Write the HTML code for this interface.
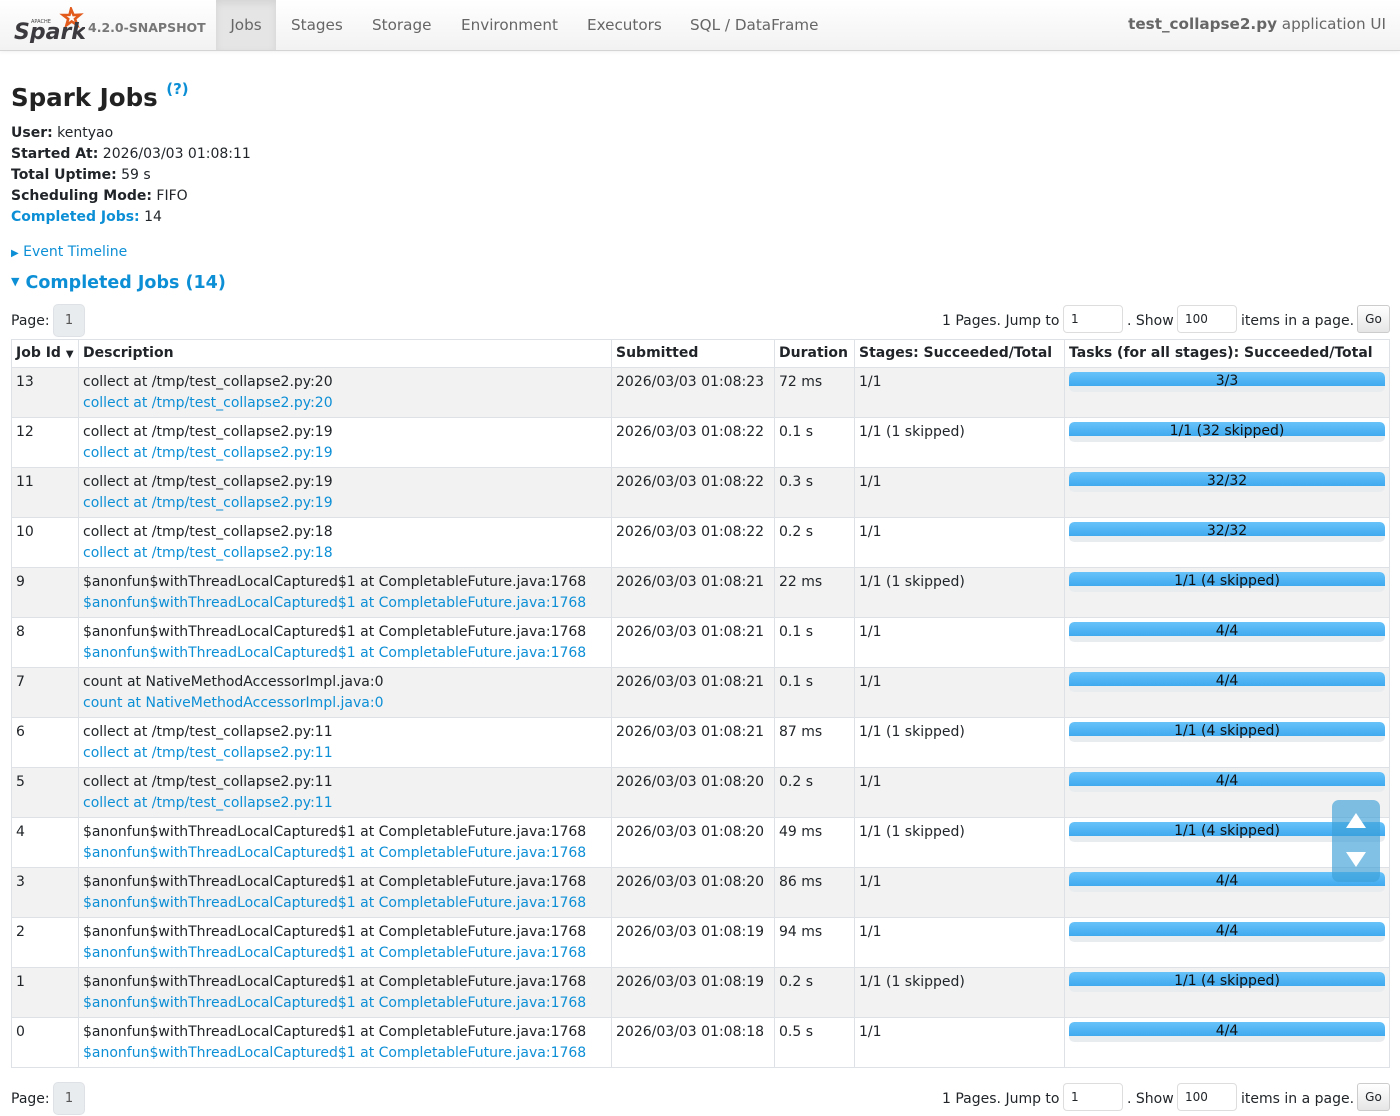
<!DOCTYPE html>
<html><head><meta charset="utf-8"><style>
*{box-sizing:border-box}
body{margin:0;width:1400px;height:1115px;overflow:hidden;font-family:"DejaVu Sans","Liberation Sans",sans-serif;font-size:14px;color:#212529;background:#fff}
a{color:#0d8fd6;text-decoration:none}
.nav{position:absolute;left:0;top:0;width:1400px;height:51px;background:linear-gradient(#fff,#f2f2f2);border-bottom:1px solid #d4d4d4;box-shadow:0 1px 4px rgba(0,0,0,.06)}
.nav .logo{position:absolute;left:13px;top:7px}
.ver{position:absolute;left:88px;top:20px;font-size:12.5px;font-weight:bold;color:#777}
.tab{position:absolute;height:50px;line-height:50px;font-size:15.2px;color:#666;top:0}
.tab.act{background:#e5e5e5;box-shadow:inset 0 3px 8px rgba(0,0,0,.08)}
.app{position:absolute;right:14px;top:15px;font-size:15.2px;color:#666}
h3{position:absolute;left:11px;top:83px;margin:0;font-size:24.5px;font-weight:bold;color:#222}
h3 sup{font-size:15px;position:relative;top:-3px}
.info{position:absolute;left:11px;top:123px;line-height:21px;font-size:14px}
.tl{position:absolute;left:11px;top:244px;font-size:14px}
.cj{position:absolute;left:11px;top:273px;font-size:17.5px;font-weight:bold}
.pg{position:absolute;left:11px;height:34px;width:1378px;font-size:14px}
.pg .lbl{position:absolute;left:0;top:9px}
.pg .pb{position:absolute;left:42px;top:0;width:32px;height:33px;background:#e9ecef;border:1px solid #dee2e6;border-radius:5px;text-align:center;line-height:31px;color:#555;font-size:13px}
.pg .r{position:absolute;right:0;top:0;height:34px}
.pg .r span{position:absolute;top:9px;white-space:nowrap}
.inp{position:absolute;top:1px;height:28px;border:1px solid #ddd;border-radius:4px;font-size:12px;padding:6px 7px;background:#fff}
.go{position:absolute;top:1px;height:28px;width:33px;border:1px solid #ccc;border-radius:3px;background:linear-gradient(#fff,#e6e6e6);font-size:12px;text-align:center;line-height:26px}
table{position:absolute;left:11px;top:339px;border-collapse:collapse;table-layout:fixed;width:1378px}
td,th{border:1px solid #dee2e6;vertical-align:top;text-align:left;white-space:nowrap;overflow:hidden}
th{height:28px;font-weight:bold;padding:5px 4px 0}
td{height:50px;line-height:21px;padding:4px 4px 0}
tr.o td{background:#f2f2f2}
.bar{position:relative;height:20px;margin-top:0;background:#e9ecef;border-radius:5px;overflow:hidden;text-align:center;line-height:20px;color:#111}
.bar i{position:absolute;left:0;top:0;right:0;height:14px;background:linear-gradient(#68c3f9,#3fa9ef);border-radius:5px 5px 0 0}
.bar b{position:relative;font-weight:normal;top:-1px}
.scr{position:absolute;left:1332px;top:800px;width:48px;height:82px;background:rgba(60,160,215,.65);border-radius:7px}
</style></head><body>
<div class="nav">
<svg class="logo" width="72" height="36" viewBox="0 0 72 36"><path d="M58 2l2.5 6 6.5-.3-5 4.2 2.2 6.2-5.5-3.6-5.3 3.8 1.8-6.3-5.2-4 6.5-.1z" fill="none" stroke="#e25a1c" stroke-width="2.6"/><text x="18" y="16" font-size="5" font-family="DejaVu Sans" fill="#444">APACHE</text><text x="1" y="32" font-size="22" font-style="italic" font-family="DejaVu Sans" fill="#3c3a3e" font-weight="bold">Spark</text></svg>
<div class="ver">4.2.0-SNAPSHOT</div>
<div class="tab act" style="left:216px;width:60px;text-align:center">Jobs</div>
<div class="tab" style="left:291px">Stages</div>
<div class="tab" style="left:372px">Storage</div>
<div class="tab" style="left:461px">Environment</div>
<div class="tab" style="left:587px">Executors</div>
<div class="tab" style="left:690px">SQL / DataFrame</div>
<div class="app"><b>test_collapse2.py</b> application UI</div>
</div>
<h3>Spark Jobs <sup><a>(?)</a></sup></h3>
<div class="info"><b>User:</b> kentyao<br><b>Started At:</b> 2026/03/03 01:08:11<br><b>Total Uptime:</b> 59 s<br><b>Scheduling Mode:</b> FIFO<br><a><b>Completed Jobs:</b></a> 14</div>
<div class="tl"><a><span style="font-size:10px">&#9654;</span> Event Timeline</a></div>
<div class="cj"><a><span style="font-size:11px;position:relative;top:-3px">&#9660;</span> Completed Jobs (14)</a></div>
<div class="pg" style="top:304px"><span class="lbl">Page:</span><div class="pb">1</div>
<div class="r" style="width:447px"><span style="left:0">1 Pages. Jump to</span><div class="inp" style="left:121px;width:60px">1</div><span style="left:185px">. Show</span><div class="inp" style="left:235px;width:60px">100</div><span style="left:299px">items in a page.</span><div class="go" style="left:415px">Go</div></div></div>
<table>
<colgroup><col style="width:67px"><col style="width:533px"><col style="width:163px"><col style="width:80px"><col style="width:210px"><col style="width:325px"></colgroup>
<tr><th>Job Id <span style="font-size:10px">&#9660;</span></th><th>Description</th><th>Submitted</th><th>Duration</th><th>Stages: Succeeded/Total</th><th>Tasks (for all stages): Succeeded/Total</th></tr>
<tr class="o"><td>13</td><td>collect at /tmp/test_collapse2.py:20<br><a>collect at /tmp/test_collapse2.py:20</a></td><td>2026/03/03 01:08:23</td><td>72 ms</td><td>1/1</td><td><div class="bar"><i></i><b>3/3</b></div></td></tr>
<tr><td>12</td><td>collect at /tmp/test_collapse2.py:19<br><a>collect at /tmp/test_collapse2.py:19</a></td><td>2026/03/03 01:08:22</td><td>0.1 s</td><td>1/1 (1 skipped)</td><td><div class="bar"><i></i><b>1/1 (32 skipped)</b></div></td></tr>
<tr class="o"><td>11</td><td>collect at /tmp/test_collapse2.py:19<br><a>collect at /tmp/test_collapse2.py:19</a></td><td>2026/03/03 01:08:22</td><td>0.3 s</td><td>1/1</td><td><div class="bar"><i></i><b>32/32</b></div></td></tr>
<tr><td>10</td><td>collect at /tmp/test_collapse2.py:18<br><a>collect at /tmp/test_collapse2.py:18</a></td><td>2026/03/03 01:08:22</td><td>0.2 s</td><td>1/1</td><td><div class="bar"><i></i><b>32/32</b></div></td></tr>
<tr class="o"><td>9</td><td>$anonfun$withThreadLocalCaptured$1 at CompletableFuture.java:1768<br><a>$anonfun$withThreadLocalCaptured$1 at CompletableFuture.java:1768</a></td><td>2026/03/03 01:08:21</td><td>22 ms</td><td>1/1 (1 skipped)</td><td><div class="bar"><i></i><b>1/1 (4 skipped)</b></div></td></tr>
<tr><td>8</td><td>$anonfun$withThreadLocalCaptured$1 at CompletableFuture.java:1768<br><a>$anonfun$withThreadLocalCaptured$1 at CompletableFuture.java:1768</a></td><td>2026/03/03 01:08:21</td><td>0.1 s</td><td>1/1</td><td><div class="bar"><i></i><b>4/4</b></div></td></tr>
<tr class="o"><td>7</td><td>count at NativeMethodAccessorImpl.java:0<br><a>count at NativeMethodAccessorImpl.java:0</a></td><td>2026/03/03 01:08:21</td><td>0.1 s</td><td>1/1</td><td><div class="bar"><i></i><b>4/4</b></div></td></tr>
<tr><td>6</td><td>collect at /tmp/test_collapse2.py:11<br><a>collect at /tmp/test_collapse2.py:11</a></td><td>2026/03/03 01:08:21</td><td>87 ms</td><td>1/1 (1 skipped)</td><td><div class="bar"><i></i><b>1/1 (4 skipped)</b></div></td></tr>
<tr class="o"><td>5</td><td>collect at /tmp/test_collapse2.py:11<br><a>collect at /tmp/test_collapse2.py:11</a></td><td>2026/03/03 01:08:20</td><td>0.2 s</td><td>1/1</td><td><div class="bar"><i></i><b>4/4</b></div></td></tr>
<tr><td>4</td><td>$anonfun$withThreadLocalCaptured$1 at CompletableFuture.java:1768<br><a>$anonfun$withThreadLocalCaptured$1 at CompletableFuture.java:1768</a></td><td>2026/03/03 01:08:20</td><td>49 ms</td><td>1/1 (1 skipped)</td><td><div class="bar"><i></i><b>1/1 (4 skipped)</b></div></td></tr>
<tr class="o"><td>3</td><td>$anonfun$withThreadLocalCaptured$1 at CompletableFuture.java:1768<br><a>$anonfun$withThreadLocalCaptured$1 at CompletableFuture.java:1768</a></td><td>2026/03/03 01:08:20</td><td>86 ms</td><td>1/1</td><td><div class="bar"><i></i><b>4/4</b></div></td></tr>
<tr><td>2</td><td>$anonfun$withThreadLocalCaptured$1 at CompletableFuture.java:1768<br><a>$anonfun$withThreadLocalCaptured$1 at CompletableFuture.java:1768</a></td><td>2026/03/03 01:08:19</td><td>94 ms</td><td>1/1</td><td><div class="bar"><i></i><b>4/4</b></div></td></tr>
<tr class="o"><td>1</td><td>$anonfun$withThreadLocalCaptured$1 at CompletableFuture.java:1768<br><a>$anonfun$withThreadLocalCaptured$1 at CompletableFuture.java:1768</a></td><td>2026/03/03 01:08:19</td><td>0.2 s</td><td>1/1 (1 skipped)</td><td><div class="bar"><i></i><b>1/1 (4 skipped)</b></div></td></tr>
<tr><td>0</td><td>$anonfun$withThreadLocalCaptured$1 at CompletableFuture.java:1768<br><a>$anonfun$withThreadLocalCaptured$1 at CompletableFuture.java:1768</a></td><td>2026/03/03 01:08:18</td><td>0.5 s</td><td>1/1</td><td><div class="bar"><i></i><b>4/4</b></div></td></tr>
</table>
<div class="pg" style="top:1082px"><span class="lbl">Page:</span><div class="pb">1</div>
<div class="r" style="width:447px"><span style="left:0">1 Pages. Jump to</span><div class="inp" style="left:121px;width:60px">1</div><span style="left:185px">. Show</span><div class="inp" style="left:235px;width:60px">100</div><span style="left:299px">items in a page.</span><div class="go" style="left:415px">Go</div></div></div>
<div class="scr"><svg width="48" height="82" viewBox="0 0 48 82"><path d="M14 28L24 13L34 28Z" fill="#fff"/><path d="M14 52L24 67L34 52Z" fill="#fff"/></svg></div>
</body></html>
